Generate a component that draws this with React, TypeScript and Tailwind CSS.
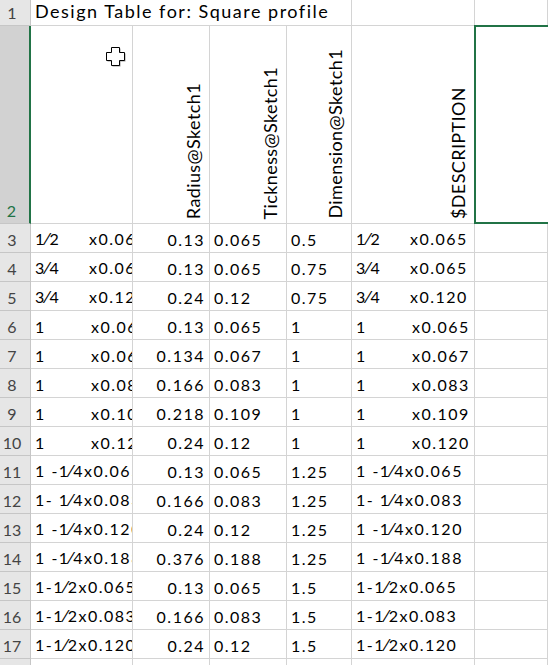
const FONT = "font-['Lato','Liberation_Sans',sans-serif]"

type Row = {
  a: string | [string, string]
  b: string
  c: string
  d: string
}

const rows: Row[] = [
  { a: ['1⁄2', 'x0.065'], b: '0.13', c: '0.065', d: '0.5' },
  { a: ['3⁄4', 'x0.065'], b: '0.13', c: '0.065', d: '0.75' },
  { a: ['3⁄4', 'x0.120'], b: '0.24', c: '0.12', d: '0.75' },
  { a: ['1', 'x0.065'], b: '0.13', c: '0.065', d: '1' },
  { a: ['1', 'x0.067'], b: '0.134', c: '0.067', d: '1' },
  { a: ['1', 'x0.083'], b: '0.166', c: '0.083', d: '1' },
  { a: ['1', 'x0.109'], b: '0.218', c: '0.109', d: '1' },
  { a: ['1', 'x0.120'], b: '0.24', c: '0.12', d: '1' },
  { a: '1 -1⁄4x0.065', b: '0.13', c: '0.065', d: '1.25' },
  { a: '1- 1⁄4x0.083', b: '0.166', c: '0.083', d: '1.25' },
  { a: '1 -1⁄4x0.120', b: '0.24', c: '0.12', d: '1.25' },
  { a: '1 -1⁄4x0.188', b: '0.376', c: '0.188', d: '1.25' },
  { a: '1-1⁄2x0.065', b: '0.13', c: '0.065', d: '1.5' },
  { a: '1-1⁄2x0.083', b: '0.166', c: '0.083', d: '1.5' },
  { a: '1-1⁄2x0.120', b: '0.24', c: '0.12', d: '1.5' },
]

const cell = 'border-r border-b border-[#d4d4d4] overflow-hidden whitespace-nowrap flex items-end pb-[4px] px-[4px] text-[16px] leading-none tracking-[1.5px] text-black'
const head = 'border-r border-b border-[#c6c6c6] bg-[#e6e6e6] text-[#444] text-[16px] leading-none flex items-end justify-center pr-[6px] pb-[4px]'

function Frac({ s }: { s: string }) {
  const parts = s.split('⁄')
  return (
    <>
      {parts.map((p, i) => (
        <span key={i}>
          {i > 0 && <span className="font-['DejaVu_Sans'] text-[16px] tracking-[0px] mr-[1px]">⁄</span>}
          {p}
        </span>
      ))}
    </>
  )
}

function Desc({ v }: { v: string | [string, string] }) {
  if (typeof v === 'string') return <span><Frac s={v} /></span>
  const w = v[0] === '1' ? 'w-[56px]' : 'w-[54px]'
  return (
    <span>
      <span className={`inline-block ${w}`}><Frac s={v[0]} /></span>
      {v[1]}
    </span>
  )
}

function Vert({ text }: { text: string }) {
  return (
    <div className="border-r border-b border-[#d4d4d4] flex items-end justify-end pr-[7px] pb-[4px]">
      <span className="[writing-mode:vertical-rl] rotate-180 text-[18px] leading-none tracking-[0.4px]">{text}</span>
    </div>
  )
}

export default function App() {
  return (
    <div className={`w-[548px] h-[665px] overflow-hidden bg-white ${FONT}`}>
      <div className="grid grid-cols-[31px_102px_77px_77px_65px_123px_1fr] grid-rows-[26px_198px_repeat(16,29px)]">
        <div className={head}>1</div>
        <div className={`${cell} col-span-4 text-[18px] tracking-[1.2px] pb-[5px]`}>Design Table for: Square profile</div>
        <div className={cell}></div>
        <div className={cell}></div>

        <div className="border-b border-[#c6c6c6] border-r-2 border-r-[#217346] bg-[#d2d2d2] text-[#217346] text-[16px] leading-none flex items-end justify-center pr-[6px] pb-[4px]">2</div>
        <div className="border-r border-b border-[#d4d4d4] relative">
          <svg className="absolute left-[75px] top-[21px]" width="21" height="22" viewBox="0 0 21 22">
            <polygon points="6.5,1.5 14.5,1.5 14.5,6.5 19.5,6.5 19.5,14.5 14.5,14.5 14.5,19.5 6.5,19.5 6.5,14.5 1.5,14.5 1.5,6.5 6.5,6.5" fill="#9a9a9a" />
            <polygon points="5.5,0.5 13.5,0.5 13.5,5.5 18.5,5.5 18.5,13.5 13.5,13.5 13.5,18.5 5.5,18.5 5.5,13.5 0.5,13.5 0.5,5.5 5.5,5.5" fill="#fff" stroke="#000" strokeWidth="1" />
          </svg>
        </div>
        <Vert text="Radius@Sketch1" />
        <Vert text="Tickness@Sketch1" />
        <Vert text="Dimension@Sketch1" />
        <Vert text="$DESCRIPTION" />
        <div className="border-b border-[#d4d4d4] relative">
          <div className="absolute -left-[1px] -top-[1px] right-0 -bottom-[1px] border-2 border-r-0 border-[#217346]" />
        </div>

        {rows.map((r, i) => (
          <div key={i} className="contents">
            <div className={head}>{i + 3}</div>
            <div className={cell}><Desc v={r.a} /></div>
            <div className={`${cell} justify-end`}>{r.b}</div>
            <div className={cell}>{r.c}</div>
            <div className={cell}>{r.d}</div>
            <div className={cell}><Desc v={r.a} /></div>
            <div className={cell}></div>
          </div>
        ))}

        <div className={head}></div>
        <div className={cell}></div>
        <div className={cell}></div>
        <div className={cell}></div>
        <div className={cell}></div>
        <div className={cell}></div>
        <div className={cell}></div>
      </div>
    </div>
  )
}
